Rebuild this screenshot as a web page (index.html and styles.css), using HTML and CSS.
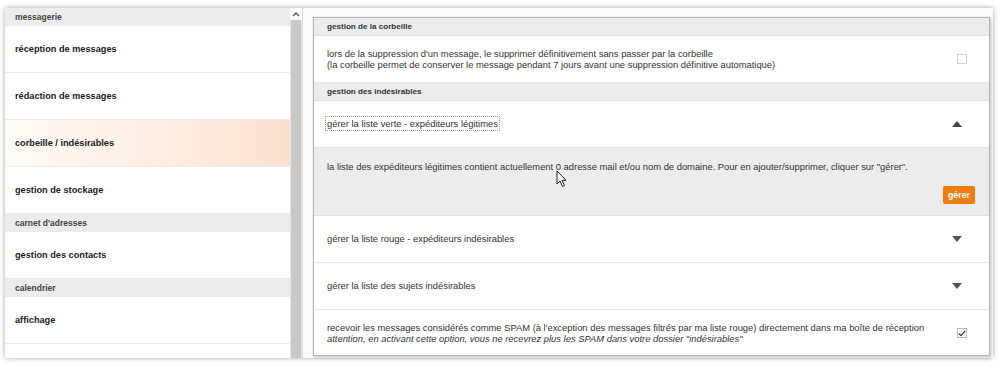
FILE: index.html
```html
<!DOCTYPE html>
<html lang="fr">
<head>
<meta charset="utf-8">
<title>Paramètres</title>
<link rel="stylesheet" href="styles.css">
</head>
<body>
<div class="frame">
  <nav class="sidebar">
    <div class="side-head">messagerie</div>
    <div class="side-item">réception de messages</div>
    <div class="side-item">rédaction de messages</div>
    <div class="side-item active">corbeille / indésirables</div>
    <div class="side-item">gestion de stockage</div>
    <div class="side-head">carnet d'adresses</div>
    <div class="side-item">gestion des contacts</div>
    <div class="side-head">calendrier</div>
    <div class="side-item">affichage</div>
    <div class="side-item"></div>
  </nav>
  <div class="scrollbar">
    <div class="scroll-up"><svg width="8" height="6" viewBox="0 0 8 6"><path d="M1 5 L4 2 L7 5" fill="none" stroke="#555" stroke-width="1.4"/></svg></div>
    <div class="scroll-thumb"></div>
  </div>
  <main class="content">
    <section class="box">
      <div class="box-head">gestion de la corbeille</div>
      <div class="row">
        <div class="row-text">lors de la suppression d'un message, le supprimer définitivement sans passer par la corbeille<br>(la corbeille permet de conserver le message pendant 7 jours avant une suppression définitive automatique)</div>
        <span class="check"></span>
      </div>
      <div class="box-head">gestion des indésirables</div>
      <div class="row">
        <div class="row-text"><span class="focused">gérer la liste verte - expéditeurs légitimes</span></div>
        <span class="tri up"></span>
      </div>
      <div class="panel">
        <div class="panel-text">la liste des expéditeurs légitimes contient actuellement 0 adresse mail et/ou nom de domaine. Pour en ajouter/supprimer, cliquer sur "gérer".</div>
        <div class="panel-actions"><button class="btn">gérer</button></div>
      </div>
      <div class="row">
        <div class="row-text">gérer la liste rouge - expéditeurs indésirables</div>
        <span class="tri down"></span>
      </div>
      <div class="row">
        <div class="row-text">gérer la liste des sujets indésirables</div>
        <span class="tri down"></span>
      </div>
      <div class="row last">
        <div class="row-text">recevoir les messages considérés comme SPAM (à l'exception des messages filtrés par ma liste rouge) directement dans ma boîte de réception<br><em>attention, en activant cette option, vous ne recevrez plus les SPAM dans votre dossier "indésirables"</em></div>
        <span class="check checked"><svg width="10" height="9" viewBox="0 0 10 9"><path d="M1 4.5 L3.8 7.2 L9 1.2" fill="none" stroke="#333" stroke-width="1.5"/></svg></span>
      </div>
    </section>
  </main>
  <svg class="cursor" width="12" height="18" viewBox="0 0 12 18"><path d="M1 1 L1 14 L4 11 L6.5 16.5 L8.5 15.6 L6 10.2 L10 10.2 Z" fill="#fff" stroke="#222" stroke-width="1"/></svg>
</div>
</body>
</html>
```

FILE: styles.css
```css
* { box-sizing: border-box; }
html, body { margin: 0; padding: 0; }
body {
  width: 998px;
  height: 365px;
  background: #fff;
  font-family: "Liberation Sans", Arial, sans-serif;
  color: #333;
  overflow: hidden;
}
.frame {
  position: relative;
  margin: 8px 5px 0 5px;
  height: 350px;
  display: flex;
  background: #f9f9f9;
  box-shadow: 0 0 5px rgba(0,0,0,0.35);
}
.sidebar {
  width: 285px;
  background: #fff;
  display: flex;
  flex-direction: column;
  overflow: hidden;
}
.side-head {
  height: 18px;
  flex: none;
  background: #ececec;
  color: #444;
  font-weight: bold;
  font-size: 8.5px;
  line-height: 18px;
  padding-left: 10px;
}
.side-item {
  height: 47px;
  flex: none;
  border-bottom: 1px solid #ebebeb;
  color: #222;
  font-weight: bold;
  font-size: 9.2px;
  line-height: 46px;
  padding-left: 10px;
}
.side-item.active {
  background: linear-gradient(to right, #fffaf7 0%, #fdf0e7 45%, #fbe1cf 100%);
}
.scrollbar {
  width: 12px;
  flex: none;
  background: #e6e6e6;
  display: flex;
  flex-direction: column;
}
.scroll-up {
  height: 12px;
  background: #fff;
  display: flex;
  align-items: center;
  justify-content: center;
}
.scroll-thumb {
  flex: 1;
  margin: 0 1px;
  background: #c9c9c9;
}
.content {
  flex: 1;
  padding: 9px 3px 2px 10px;
  background: #fbfbfb;
  border-left: 1px solid #e0e0e0;
}
.box {
  background: #fff;
  border: 1px solid #b4b4b4;
  box-shadow: 1px 1px 3px rgba(0,0,0,0.25);
  height: 100%;
  overflow: hidden;
}
.box-head {
  height: 18px;
  background: #ececec;
  font-weight: bold;
  font-size: 8.1px;
  line-height: 18px;
  color: #333;
  padding-left: 13px;
  border-bottom: 1px solid #e2e2e2;
}
.row {
  height: 47px;
  display: flex;
  align-items: center;
  justify-content: space-between;
  padding: 0 22px 0 13px;
  border-bottom: 1px solid #e6e6e6;
  font-size: 9.4px;
  line-height: 11.5px;
}
.row.last { border-bottom: none; height: 46px; }
.row-text { color: #333; }
.row-text em { font-style: italic; }
.focused {
  outline: 1px dotted #999;
  outline-offset: 1px;
}
.check {
  width: 10px;
  height: 10px;
  border: 1px solid #cfcfcf;
  background: #fff;
  display: flex;
  align-items: center;
  justify-content: center;
  flex: none;
}
.check.checked { border-color: #bbb; }
.tri {
  width: 0;
  height: 0;
  border-left: 5px solid transparent;
  border-right: 5px solid transparent;
  margin-right: 5px;
  flex: none;
}
.tri.up { border-bottom: 6px solid #444; }
.tri.down { border-top: 6px solid #555; }
.panel {
  height: 68px;
  background: #ececec;
  border-bottom: 1px solid #e0e0e0;
  padding: 13px 14px 0 13px;
  font-size: 9.4px;
  line-height: 11.5px;
  display: flex;
  flex-direction: column;
}
.panel-actions {
  display: flex;
  justify-content: flex-end;
  margin-top: 13px;
}
.btn {
  border: none;
  background: #ee7d0f;
  color: #fff;
  font-family: "Liberation Sans", Arial, sans-serif;
  font-weight: bold;
  font-size: 8.8px;
  height: 18px;
  width: 32px;
  padding: 0;
  border-radius: 2px;
}
.cursor {
  position: absolute;
  left: 551px;
  top: 162px;
}
```
